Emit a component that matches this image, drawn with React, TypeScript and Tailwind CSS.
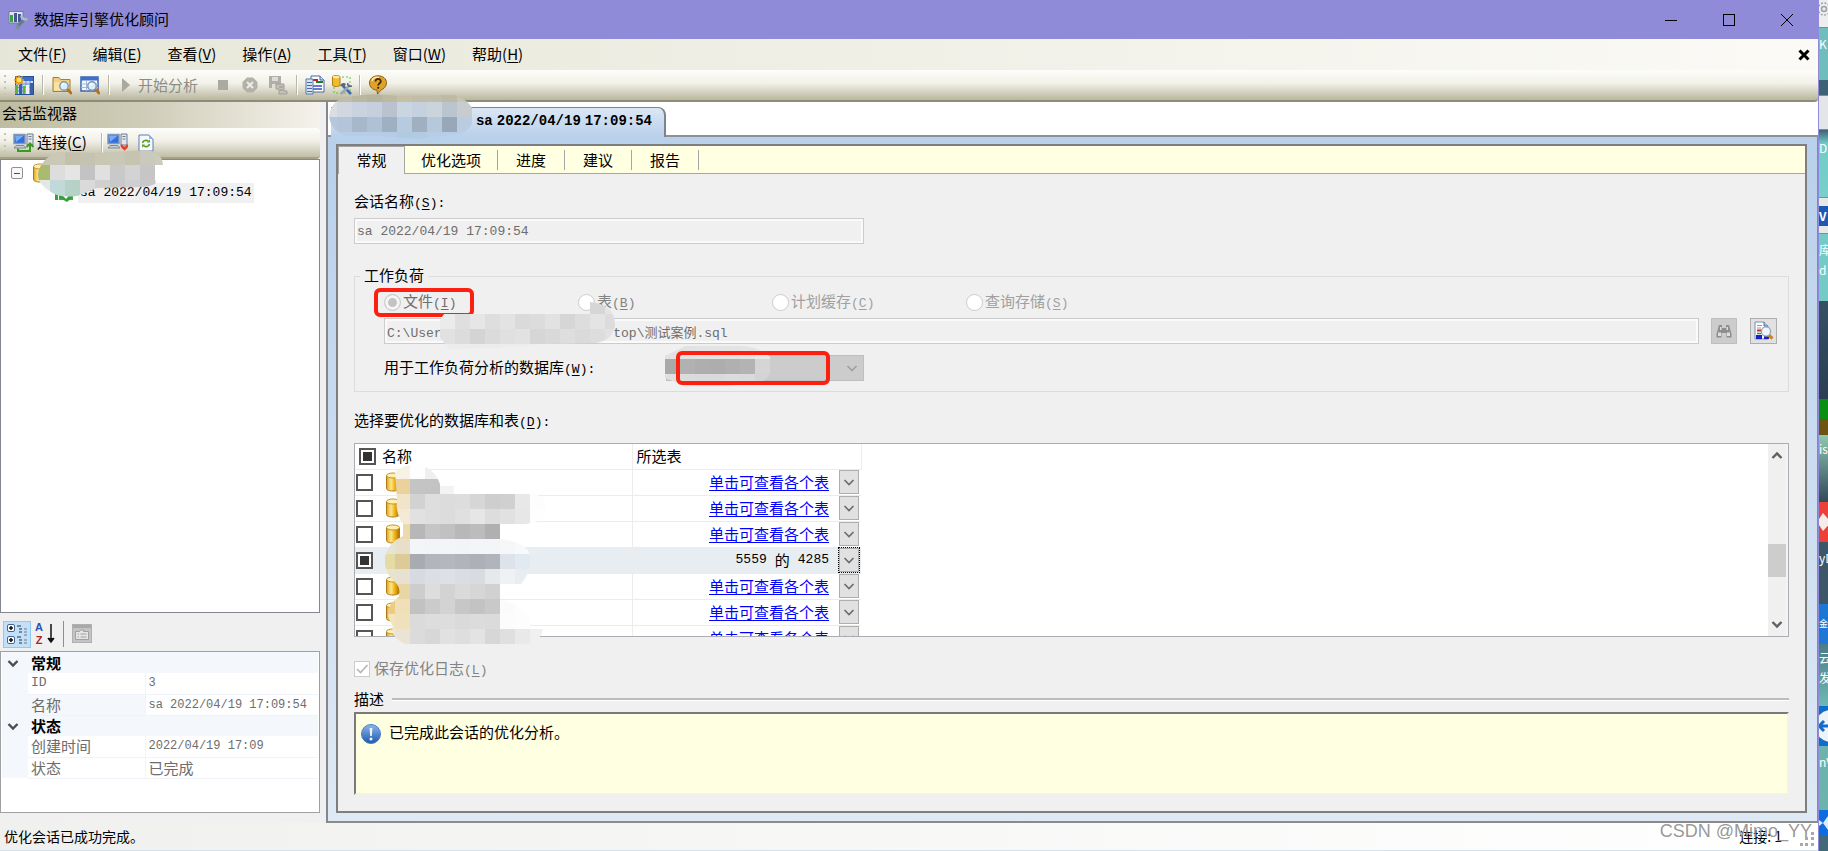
import React from 'react';
import clsx from 'clsx';

const MONO = "font-['Liberation_Mono','Noto_Sans_CJK_SC',monospace]";

/* ---------- data ---------- */

const MENUS = [
  { label: '文件', hotkey: 'F' },
  { label: '编辑', hotkey: 'E' },
  { label: '查看', hotkey: 'V' },
  { label: '操作', hotkey: 'A' },
  { label: '工具', hotkey: 'T' },
  { label: '窗口', hotkey: 'W' },
  { label: '帮助', hotkey: 'H' },
];

const TABS = ['优化选项', '进度', '建议', '报告'];

const SOURCES = [
  { label: '文件', hotkey: 'I', checked: true, tone: 'text-[#6d6d6d]' },
  { label: '表', hotkey: 'B', checked: false, tone: 'text-[#838383]' },
  { label: '计划缓存', hotkey: 'C', checked: false, tone: 'text-[#a0a0a0]' },
  { label: '查询存储', hotkey: 'S', checked: false, tone: 'text-[#a0a0a0]' },
];

const DATABASES = [
  { id: 1, selected: false },
  { id: 2, selected: false },
  { id: 3, selected: false },
  { id: 4, selected: true },
  { id: 5, selected: false },
  { id: 6, selected: false },
  { id: 7, selected: false },
];

const PROPERTIES = [
  {
    category: '常规',
    rows: [
      { name: 'ID', value: '3', active: false },
      { name: '名称', value: 'sa 2022/04/19 17:09:54', active: true },
    ],
  },
  {
    category: '状态',
    rows: [
      { name: '创建时间', value: '2022/04/19 17:09', active: false },
      { name: '状态', value: '已完成', active: false },
    ],
  },
];

// The middle of the path is censored
const WORKLOAD_FILE = 'C:\\User' + ' '.repeat(22) + 'top\\测试案例.sql';

/* ---------- small pieces ---------- */

const Hotkey: React.FC<{ k: string; colon?: boolean }> = ({ k, colon }) => (
  <span className={clsx('text-[13px]', MONO)}>
    (<u className="underline-offset-2">{k}</u>){colon && ':'}
  </span>
);

const Separator = () => (
  <span className="h-5 w-0.5 border-l border-[#b9b8a6] bg-white" />
);

const Grip = () => (
  <span className="flex flex-col gap-1">
    {[0, 1, 2, 3].map((i) => (
      <span key={i} className="h-0.5 w-0.5 bg-[#c5c3b4]" />
    ))}
  </span>
);

const Chevron: React.FC<{ className?: string; up?: boolean; bold?: boolean }> = ({ className, up, bold }) => (
  <svg viewBox="0 0 12 12" className={clsx('h-3 w-3', className)} fill="none" stroke="currentColor" strokeWidth={bold ? 2.4 : 1.6}>
    <path d={up ? 'M1.5 8 6 3.5 10.5 8' : 'M1.5 4 6 8.5 10.5 4'} />
  </svg>
);

const CylinderIcon: React.FC<{ className?: string }> = ({ className }) => (
  <svg viewBox="0 0 16 20" className={clsx('h-5 w-4', className)}>
    <defs>
      <linearGradient id="cyl" x1="0" x2="1">
        <stop offset="0" stopColor="#e0a41e" />
        <stop offset="0.35" stopColor="#fbe78e" />
        <stop offset="0.65" stopColor="#f0b010" />
        <stop offset="1" stopColor="#a86c04" />
      </linearGradient>
    </defs>
    <path d="M1.500 3.500v13c0 1.500 3 2.500 6.500 2.500s6.500-1 6.500-2.500v-13z" fill="url(#cyl)" stroke="#b07a10" strokeWidth="1" />
    <ellipse cx="8" cy="3.500" rx="6.500" ry="2.500" fill="#fdf0b0" stroke="#c79427" strokeWidth="1" />
  </svg>
);

/* ---------- toolbar icons ---------- */

const AppIcon = () => (
  <svg viewBox="0 0 20 20" className="h-5 w-5">
    <rect x="1" y="1.500" width="14" height="11.500" fill="#dfe6ee" stroke="#6d7f99" />
    <path d="M2 5h3v7H2z" fill="#3da03a" />
    <path d="M6 3h3v9H6z" fill="#43589c" />
    <path d="M10 4h3v8h-3z" fill="#43589c" />
    <path d="M17 7.500 9.500 17" stroke="#68798c" strokeWidth="3" />
    <path d="M13 5.500c1 3 3 4.500 6.500 3.500" stroke="#a9bccb" strokeWidth="2.500" fill="none" />
    <circle cx="9.500" cy="17" r="2.200" fill="#7d8ea0" />
  </svg>
);

const NewSessionIcon = () => (
  <svg viewBox="0 0 20 20" className="h-5 w-5">
    <rect x="1.500" y="1.500" width="18" height="18" fill="#c9dcf6" stroke="#2b4f95" />
    <path d="M2 2h17v4H2z" fill="#3f6fc4" />
    <path d="M2 9h17M2 12.500h17M2 16h17M8 6v13M12 6v13M16 6v13" stroke="#6f8fc9" strokeWidth="1" />
    <path d="M1 10h3v9H1zM9 11h2v8H9z" fill="#5fb13b" />
    <path d="M5 9h3v10H5zM16 8h3v11h-3z" fill="#3a5ea8" />
    <path d="M12 10h3v9h-3z" fill="#eef3fb" />
    <path d="M5 0v10M0 5h10M1.500 1.500l7 7M8.500 1.500l-7 7" stroke="#f59a14" strokeWidth="1.500" />
    <circle cx="5" cy="5" r="3" fill="#ffe34d" stroke="#f0900a" />
  </svg>
);

const Magnifier = () => (
  <>
    <path d="m15 14 4 4" stroke="#b8701c" strokeWidth="3" strokeLinecap="round" />
    <circle cx="12" cy="11" r="4.200" fill="#dbeeff" stroke="#8195ad" strokeWidth="1.400" />
    <path d="M9.800 10.500c.3-1.300 1.200-2 2.400-2" stroke="#fff" strokeWidth="1.300" fill="none" />
  </>
);

const FolderFindIcon = () => (
  <svg viewBox="0 0 20 20" className="h-5 w-5">
    <path d="M1 2.500h6l1.500 2H18v12H1z" fill="#f0d080" stroke="#a08038" />
    <path d="M2 7h15v8.500H2z" fill="#f9e3a2" />
    <Magnifier />
  </svg>
);

const TableFindIcon = () => (
  <svg viewBox="0 0 20 20" className="h-5 w-5">
    <rect x="1" y="2" width="17" height="14" fill="#f4f8fd" stroke="#3763b4" strokeWidth="1.500" />
    <path d="M1 2h17v3.500H1z" fill="#3f70c8" />
    <path d="M1 9h17M1 12.500h17M6.500 5v11M12 5v11" stroke="#9db6dc" />
    <Magnifier />
  </svg>
);

const CancelIcon = () => (
  <svg viewBox="0 0 16 16" className="h-4 w-4">
    <path d="M5 .5h6L15.500 5v6L11 15.500H5L.5 11V5z" fill="#b3b2aa" />
    <path d="m5 5 6 6M11 5l-6 6" stroke="#eeede6" strokeWidth="2" />
  </svg>
);

const SaveScriptIcon = () => (
  <svg viewBox="0 0 20 20" className="h-5 w-5">
    <path d="M1 1h12v12H1z" fill="#b0afa7" />
    <path d="M4 2h6v4H4zM4 9h6v4H4z" fill="#deddd5" />
    <path d="M8 9h8v7h3v3h-8v-5H8z" fill="#c2c1b8" stroke="#a09f97" />
    <path d="M11 12h4M12 15h3" stroke="#94938b" />
  </svg>
);

const ReportIcon = () => (
  <svg viewBox="0 0 20 20" className="h-5 w-5">
    <path d="M6 1h9l4 4v12H6z" fill="#fff" stroke="#4a69a5" />
    <path d="M15 1v4h4" fill="#c7d7ef" stroke="#4a69a5" />
    <path d="M8 5h5" stroke="#c42020" strokeWidth="2" />
    <path d="M11 7h7" stroke="#1d7a2a" strokeWidth="2" />
    <path d="M8 11h9M8 14h9" stroke="#3a4fc0" strokeWidth="1.500" />
    <path d="M1 4h7v15H1z" fill="#d6e2f2" stroke="#5d7ca8" />
    <path d="M2 7.500h5M2 10.500h5M2 13.500h5M2 16.500h5" stroke="#4b6ea2" />
  </svg>
);

const ToolsIcon = () => (
  <svg viewBox="0 0 20 20" className="h-5 w-5">
    <rect x="2" y="2" width="16" height="16" fill="none" stroke="#58c940" strokeDasharray="2 2" />
    <path d="M.5 2c0-2 7.500-2 7.500 0v8c0 2-7.500 2-7.500 0z" fill="#f0bc2c" stroke="#ad7d11" />
    <ellipse cx="4.200" cy="2" rx="3.400" ry="1.300" fill="#ffeaa0" />
    <path d="m11 11 8 8" stroke="#3c69ad" strokeWidth="2.500" />
    <path d="m18 10-9 9" stroke="#9aa5b3" strokeWidth="2.500" />
    <path d="M8 11c1-3 4-4 6-2l-2 3z" fill="#56677c" />
    <path d="M16 8c-1 2 1 4 4 3" stroke="#56677c" strokeWidth="1.500" fill="none" />
  </svg>
);

const HelpIcon = () => (
  <svg viewBox="0 0 20 20" className="h-5 w-5">
    <path d="M10 .8c5 0 8.500 3 8.500 7 0 4-3 6-5.500 7.200-1 .6-1.400 2-3.500 4.200l-.5-4C4.500 14.800 1.500 12 1.500 8c0-4.200 3.500-7.200 8.500-7.200z" fill="#dfa32c" stroke="#8c5e12" />
    <path d="M4 6c1-3 4-4 7-3.500" stroke="#ffe9a8" strokeWidth="1.500" fill="none" />
    <path d="M7.500 6.500c0-3.500 5.500-3.300 5.300 0-.1 1.800-2.600 1.900-2.600 4" stroke="#3c2a0a" strokeWidth="1.800" fill="none" />
    <circle cx="10.200" cy="12.800" r="1.100" fill="#3c2a0a" />
  </svg>
);

const ServerIcon: React.FC<{ disconnect?: boolean }> = ({ disconnect }) => (
  <svg viewBox="0 0 21 20" className="h-5 w-[21px]">
    <path d="M14 1h6v11h-6z" fill="#e2e7ee" stroke="#6e7b8f" />
    <path d="M15.500 3.500h3M15.500 6h3" stroke="#6e7b8f" />
    <rect x="1" y="1.500" width="11" height="9" fill="#2f6fe0" stroke="#8398bd" strokeWidth="1.500" />
    <path d="M2 2.500h9L3 9z" fill="#79aaf5" />
    <path d="M3 12.500h8l2 2.500H1z" fill="#c4cbd6" stroke="#7d889b" />
    {disconnect ? (
      <path d="m14 12 3.500 4L21 12M14.500 14.500h6" stroke="#ee3a1f" strokeWidth="2.200" fill="none" />
    ) : (
      <path d="M5 15.500V18h12v-6M13.500 14 17 10.500l3.500 3.500" stroke="#3c9a20" strokeWidth="2" fill="none" />
    )}
  </svg>
);

const RefreshIcon = () => (
  <svg viewBox="0 0 16 18" className="h-[18px] w-4">
    <path d="M1 1h10l4 4v12H1z" fill="#f5f9ff" stroke="#5b7db5" />
    <path d="M11 1v4h4z" fill="#9db8e0" />
    <path d="M4.500 9c.5-2.500 4-3.500 6-1.500M11.500 10c-.5 2.500-4 3.500-6 1.500" stroke="#5b9c22" strokeWidth="1.600" fill="none" />
    <path d="M9 8.500h3v-3zM7 10.500H4v3z" fill="#5b9c22" />
  </svg>
);

const SessionIcon = () => (
  <svg viewBox="0 0 20 20" className="h-5 w-5">
    <path d="M1 5h3v12H1zM5 8h3v9H5z" fill="#3f9b46" />
    <path d="M9 3h10v14H4l5-3z" fill="#49ad50" />
    <path d="M6 10h13v4l-6 5-7-4z" fill="#34a03c" />
    <path d="m9 11.500 3 3 5-6" stroke="#fff" strokeWidth="2" fill="none" />
  </svg>
);

const CategorizedIcon = () => (
  <svg viewBox="0 0 22 22" className="h-[22px] w-[22px]">
    <rect x="1.500" y="1.500" width="7" height="7" rx="1.500" fill="#fff" stroke="#47648f" />
    <rect x="1.500" y="13.500" width="7" height="7" rx="1.500" fill="#fff" stroke="#47648f" />
    <path d="M3 5h4M5 3v4M3 17h4M5 15v4" stroke="#111" strokeWidth="1.500" />
    <path d="M11 3h4M13 6h3M13 9h3M11 14h4M13 17h3M13 20h3" stroke="#5a6b80" strokeWidth="1.300" />
    <path d="M18 6h3M18 9h3M18 12h3M18 17h3M18 20h3" stroke="#8c99aa" strokeWidth="1.300" />
  </svg>
);

const PageIcon = () => (
  <svg viewBox="0 0 20 20" className="h-5 w-5">
    <rect x="0.500" y="0.500" width="19" height="18" fill="#c4c4c4" stroke="#b0b0b0" />
    <path d="M1 1h18v3H1z" fill="#a9a9a9" />
    <path d="M3.500 7.500h4l1-1.500h3v1.500h5v8h-13z" fill="#e6e6e6" stroke="#a0a0a0" />
    <path d="M5.500 10h1.500M8.500 10h6M5.500 13h1.500M8.500 13h6" stroke="#a0a0a0" />
  </svg>
);

const BinocularsIcon = () => (
  <svg viewBox="0 0 16 16" className="h-4 w-4">
    <path d="M3 2h3v3h4V2h3l2.500 9v3.500h-5V10h-5v4.500h-5V11z" fill="#8e8e8e" />
    <path d="M2 9.500h3v3.500H2zM11 9.500h3v3.500h-3zM4 4h1.500v3H4zM10.500 4H12v3h-1.500z" fill="#dedede" />
  </svg>
);

const PreviewIcon = () => (
  <svg viewBox="0 0 20 20" className="h-5 w-5">
    <path d="M1 1h9l4 4v13H1z" fill="#fff" stroke="#7a8db5" />
    <path d="M10 1v4h4" fill="#b9c8e4" stroke="#4a69a5" />
    <path d="M3 4.500h5M3 7h4" stroke="#9a9a9a" />
    <path d="M3 9.500h4" stroke="#d02828" strokeWidth="2" />
    <path d="M3 12.500h4" stroke="#279a3a" strokeWidth="1.500" />
    <path d="M2 14h6v4H2zM10 15h5v3h-5z" fill="#1522c8" />
    <path d="m14.500 14 4 3.500" stroke="#c98516" strokeWidth="3" />
    <circle cx="12" cy="10.500" r="4.600" fill="#eef5fc" stroke="#98a3b0" strokeWidth="1.300" />
  </svg>
);

const InfoIcon = () => (
  <svg viewBox="0 0 20 20" className="h-5 w-5 shrink-0">
    <defs>
      <linearGradient id="info" x1="0" y1="0" x2="0" y2="1">
        <stop offset="0" stopColor="#8bb8ee" />
        <stop offset="1" stopColor="#1d57ac" />
      </linearGradient>
    </defs>
    <circle cx="10" cy="10" r="9.500" fill="url(#info)" stroke="#4a7cc4" />
    <path d="M8.600 4h2.800l-.6 8H9.200z" fill="#f2f4fa" />
    <circle cx="10" cy="15" r="1.500" fill="#f2f4fa" />
  </svg>
);

/* ---------- censored areas ---------- */

interface MosaicRow {
  x: number;
  h: number;
  cells: string[];
}

// Blocks are 15 px wide; a row may start anywhere on that grid.
const Mosaic: React.FC<{ id: string; w: number; h: number; outline: string; rows: MosaicRow[]; className?: string }> = ({
  id,
  w,
  h,
  outline,
  rows,
  className,
}) => {
  let y = 0;
  return (
    <svg width={w} height={h} viewBox={`0 0 ${w} ${h}`} className={clsx('pointer-events-none absolute', className)} shapeRendering="crispEdges" aria-hidden="true">
      <clipPath id={id}>
        <path d={outline} />
      </clipPath>
      <g clipPath={`url(#${id})`}>
        {rows.map((row, r) => {
          const top = y;
          y += row.h;
          return row.cells.map((fill, c) => (
            <rect key={`${r}-${c}`} x={row.x + c * 15} y={top} width={15} height={row.h} fill={fill} />
          ));
        })}
      </g>
    </svg>
  );
};

const TREE_ROWS: MosaicRow[] = [
  { x: -2, h: 15, cells: ['#c9c7b4', '#cac8b6', '#c3c1ac', '#c5c3b0', '#c9c6b1', '#c9c7b6', '#c6c3ae', '#c9c9bd', '#cdcbbc'] },
  { x: -2, h: 15, cells: ['#a9bb70', '#dddddd', '#e5e5e5', '#c3c3c3', '#e0e0e0', '#c9c9c9', '#d3d3d3', '#c6c6c6'] },
  { x: -2, h: 17, cells: ['#e3e8e4', '#c1d9d9', '#b6d1c6', '#dadada', '#d0d0d0', '#c9c9c9', '#cfcfcf', '#c8c8c8', '#c8c8c8'] },
];

const TAB_ROWS: MosaicRow[] = [
  { x: -7, h: 8, cells: ['#c9c7bb', '#bfbda9', '#bab8a1', '#b6b49c', '#bbb9a2', '#c5c0a5', '#c0bea9', '#c0beaa', '#bdbba6', '#c7c5b4'] },
  { x: -7, h: 15, cells: ['#dcdde2', '#d0d7e0', '#c9d3df', '#c6cfdc', '#b9c2ce', '#cad5e2', '#c5d1df', '#cbd3dc', '#bac5cf', '#c7cccf'] },
  { x: -7, h: 15, cells: ['#b7c7db', '#b4c5d9', '#a7b8cb', '#afc1d5', '#9fb0c3', '#b7cbe0', '#a0b0c1', '#b5c8dc', '#98a8b8', '#b9cce0'] },
  { x: -7, h: 8, cells: ['#b7cde6', '#b7cde6', '#b7cde6', '#b7cde6', '#b5cce4', '#b0cbe0', '#b3cbe2', '#b7cde6', '#b7cde6', '#b7cde6'] },
];

const PATH_ROWS: MosaicRow[] = [
  { x: 152, h: 12, cells: ['#d6d6d6', '#e4e4e4'] },
  { x: 2, h: 15, cells: ['#ebebeb', '#dfdfdf', '#e6e6e6', '#dedede', '#e3e3e3', '#dadada', '#dcdcdc', '#e2e2e2', '#d6d6d6', '#dddddd', '#e4e4e4', '#dcdcdc'] },
  { x: 2, h: 15, cells: ['#e1e1e1', '#dcdcdc', '#d4d4d4', '#dbdbdb', '#e0e0e0', '#e2e2e2', '#d6d6d6', '#d9d9d9', '#dedede', '#dadada', '#dddddd', '#e2e2e2'] },
  { x: 2, h: 5, cells: ['#ececec', '#ececec', '#ececec', '#ececec', '#ededed', '#ededed', '#eeeeee'] },
];

const COMBO_ROWS: MosaicRow[] = [
  { x: 0, h: 13, cells: ['#e2e2e2', '#e2e2e2', '#e4e4e4', '#e3e3e3', '#e3e3e3', '#e4e4e4', '#e8e8e8'] },
  { x: 0, h: 15, cells: ['#a9a9a9', '#b1b1b1', '#aeaeae', '#adadad', '#b0b0b0', '#b3b3b3', '#d5d5d5'] },
  { x: 0, h: 12, cells: ['#e0e0e0', '#dcdcdc', '#dadada', '#dadada', '#dcdcdc', '#dadada', '#d4d4d4'] },
];

const TABLE_ROWS: MosaicRow[] = [
  { x: 10, h: 15, cells: ['#f7f1e6', '#fefefe', '#efefef'] },
  { x: 10, h: 15, cells: ['#ebd19b', '#c4c4c4', '#c3c3c3', '#f3f3f3', '#fcfcfc'] },
  { x: 10, h: 15, cells: ['#f1e4c8', '#d2d2d2', '#dedede', '#dcdcdc', '#dddddd', '#d6d6d6', '#cecece', '#d0d0d0', '#e8e8e8', '#fdfdfd'] },
  { x: 10, h: 15, cells: ['#f3ead6', '#e1e1e1', '#dedede', '#dcdcdc', '#e0e0e0', '#e6e6e6', '#dddddd', '#e1e1e1', '#e7e7e7', '#fefefe'] },
  { x: -5, h: 15, cells: ['#f0d79c', '#eed9ac', '#b7b7b7', '#c5c5c5', '#c1c1c1', '#b8b8b8', '#bcbcbc', '#b0b0b0', '#f5f5f5'] },
  { x: -5, h: 15, cells: ['#e8e4d5', '#e7dfc9', '#f3f5f8', '#f2f4f7', '#f3f5f8', '#f2f4f7', '#f3f5f8', '#f3f5f8', '#f6f7f9', '#f8f9fa'] },
  { x: -5, h: 15, cells: ['#e5dca5', '#dccb96', '#a8acb0', '#b2b6bc', '#b4b8be', '#b1b5ba', '#adb1b7', '#b1b5bb', '#dce3ea', '#e2eaf1'] },
  { x: -5, h: 15, cells: ['#e8e3cf', '#e6e1d0', '#d7dbe1', '#dbdee3', '#dde0e5', '#dadde2', '#d8dbe0', '#e6e8eb', '#eff1f4', '#e8edf1'] },
  { x: -5, h: 15, cells: ['#e9cf96', '#e9d6a5', '#cdcdcd', '#dddddd', '#d3d3d3', '#dadada', '#d6d6d6', '#d1d1d1', '#fafafa'] },
  { x: -5, h: 15, cells: ['#eccb84', '#f1dfb7', '#c2c2c2', '#cbcbcb', '#d3d3d3', '#c7c7c7', '#c3c3c3', '#c9c9c9', '#fbfbfb', '#fdfdfd'] },
  { x: -5, h: 15, cells: ['#f3e6bd', '#f0e0bb', '#dbdbdb', '#dddddd', '#dddddd', '#dadada', '#dcdcdc', '#dbdbdb', '#fcfcfc', '#fdfdfd'] },
  { x: -5, h: 15, cells: ['#ece7da', '#ebe4d5', '#dbdbdb', '#d7d7d7', '#e1e1e1', '#dedede', '#e3e3e3', '#d7d7d7', '#dfdfdf', '#e9e9e9', '#f0f0f0'] },
];

/* ---------- chrome ---------- */

const TitleBar = () => (
  <header className="flex h-[39px] items-center bg-[#8f8bd8] pr-0.5 pl-2 text-black">
    <AppIcon />
    <h1 className="ml-1.5 flex-1 text-[15px]">数据库引擎优化顾问</h1>
    <button aria-label="最小化" className="flex h-full w-[58px] items-center justify-center">
      <svg viewBox="0 0 12 12" className="h-3 w-3" stroke="currentColor"><path d="M0 6.500h12" /></svg>
    </button>
    <button aria-label="最大化" className="flex h-full w-[58px] items-center justify-center">
      <span className="h-3 w-3 border border-black" />
    </button>
    <button aria-label="关闭" className="flex h-full w-[58px] items-center justify-center">
      <svg viewBox="0 0 12 12" className="h-3 w-3" stroke="currentColor"><path d="m0 0 12 12M12 0 0 12" /></svg>
    </button>
  </header>
);

const MenuBar = () => (
  <nav className="flex h-[31px] items-center bg-linear-to-r from-[#e6e6d8] to-[#fbfaf6] pr-1 pl-[5px]">
    {MENUS.map((menu) => (
      <button key={menu.hotkey} className="px-[13px] text-[15px]">
        {menu.label}(<u className="underline-offset-2">{menu.hotkey}</u>)
      </button>
    ))}
    <button aria-label="关闭会话" className="ml-auto p-1">
      <svg viewBox="0 0 12 12" className="h-3 w-3" stroke="black" strokeWidth="3"><path d="m1.500 1.500 9 9M10.500 1.500l-9 9" /></svg>
    </button>
  </nav>
);

const ToolBar = () => (
  <div className="bg-[#efeee8]">
    <div className="flex h-8 items-center rounded-br border-b-2 border-[#8e8c78] bg-linear-to-b from-[#fdfefa] via-[#f1f0e8] via-45% to-[#b9b79c] pl-1">
      <Grip />
      <div className="ml-2 flex items-center gap-2">
        <button aria-label="新建会话"><NewSessionIcon /></button>
        <Separator />
        <button aria-label="打开会话"><FolderFindIcon /></button>
        <button aria-label="打开跟踪表"><TableFindIcon /></button>
        <Separator />
        <button disabled className="flex items-center gap-2 pl-1 text-[15px] text-[#8d8c84]">
          <svg viewBox="0 0 8 14" className="h-3.5 w-2"><path d="M0 0l8 7-8 7z" fill="#aaa9a1" /></svg>
          开始分析
        </button>
      </div>
      <div className="ml-5 flex items-center gap-3.5">
        <button disabled aria-label="停止分析" className="h-2.5 w-2.5 bg-[#abaaa2]" />
        <button disabled aria-label="取消分析"><CancelIcon /></button>
        <button disabled aria-label="保存脚本" className="-ml-1"><SaveScriptIcon /></button>
      </div>
      <div className="ml-2 flex items-center gap-[7px]">
        <Separator />
        <button aria-label="查看报告"><ReportIcon /></button>
        <button aria-label="选项"><ToolsIcon /></button>
        <Separator />
        <button aria-label="帮助"><HelpIcon /></button>
      </div>
    </div>
  </div>
);

/* ---------- left side ---------- */

const SessionTree = () => (
  <div className="relative flex-1 border border-[#828790] bg-white pt-[3px]">
    <div className="flex h-5 items-center pl-2.5">
      <button aria-label="折叠" className="flex h-3 w-3 items-center justify-center rounded-xs border border-[#919191] bg-[#f8f8f8]">
        <span className="h-px w-1.5 bg-[#3b4f9c]" />
      </button>
      <CylinderIcon className="ml-[9px]" />
    </div>
    <div className="flex h-5 items-center pl-[53px]">
      <SessionIcon />
      <span className={clsx('ml-1 bg-[#f0f0f0] px-0.5 text-[13px]', MONO)}>sa 2022/04/19 17:09:54</span>
    </div>
    <Mosaic
      id="mosaic-tree"
      w={126}
      h={47}
      className="-top-2.5 left-[36px]"
      outline="M20 2 60 3 110 0Q125 2 126 15L118 15V30Q122 36 105 37L60 38 40 46Q22 48 14 42 0 34 1 24 3 10 20 2z"
      rows={TREE_ROWS}
    />
  </div>
);

const PropertyGrid = () => (
  <div className="h-[162px] border border-[#a0a0a0] bg-white px-px">
    <table className="w-full table-fixed border-collapse text-left text-[15px] text-[#6d6d6d]">
      <colgroup>
        <col className="w-[26px]" />
        <col className="w-[117px]" />
        <col />
      </colgroup>
      {PROPERTIES.map((group) => (
        <tbody key={group.category}>
          <tr className="h-[21px] bg-[#f4f7fc] text-black">
            <td className="p-0">
              <button aria-label="折叠" className="flex pl-[5px] text-[#4d4d4d]">
                <Chevron bold />
              </button>
            </td>
            <th colSpan={2} className="p-0 pl-[3px] font-bold leading-[18px]">{group.category}</th>
          </tr>
          {group.rows.map((row) => (
            <tr key={row.name} className="h-[21px]">
              <td className="bg-[#f4f7fc] p-0" />
              <td
                className={clsx(
                  'border-r border-b border-[#f0f3f9] p-0 pl-[3px] leading-[18px]',
                  row.active && 'bg-[#f4f7fc]',
                  row.name === 'ID' && MONO
                )}
              >
                {row.name === 'ID' ? <span className="text-[13px]">ID</span> : row.name}
              </td>
              <td className="border-b border-[#f0f3f9] p-0 pl-[3px] leading-[18px] whitespace-nowrap">
                {row.value === '已完成' ? row.value : <span className={clsx('block text-[12px] leading-[18px]', MONO)}>{row.value}</span>}
              </td>
            </tr>
          ))}
        </tbody>
      ))}
    </table>
  </div>
);

const SessionMonitor = () => (
  <aside className="flex w-[320px] shrink-0 flex-col bg-[#f0f0f0] pb-2.5">
    <h2 className="h-[26px] bg-linear-to-r from-[#bebca0] via-[#cfcdb8] via-45% to-[#f5f2ec] pl-0.5 text-[15px] leading-[22px]">会话监视器</h2>
    <div className="flex h-[31px] items-center rounded-r border-b-2 border-[#a3a188] bg-linear-to-b from-[#fdfefa] via-[#f1f0e8] via-45% to-[#c0bea5] pl-1">
      <Grip />
      <button className="ml-[7px] flex items-center gap-[3px] text-[15px]">
        <ServerIcon />
        <span>连接(<u className="underline-offset-2">C</u>)</span>
      </button>
      <div className="ml-3.5 flex items-center">
        <Separator />
        <button aria-label="断开连接" className="ml-1"><ServerIcon disconnect /></button>
        <button aria-label="刷新" className="ml-2.5"><RefreshIcon /></button>
      </div>
    </div>
    <SessionTree />
    <div className="flex h-[38px] items-center pt-1 pl-[3px]">
      <button aria-label="按分类顺序" className="flex h-[27px] w-7 items-center justify-center border border-[#90c8f6] bg-[#c2e0f7]">
        <CategorizedIcon />
      </button>
      <button aria-label="字母顺序" className="flex w-7 items-center justify-center">
        <span className="flex flex-col font-['Liberation_Sans',sans-serif] text-[11px] leading-[13px] font-bold">
          <span className="text-[#2c4fb0]">A</span>
          <span className="text-[#a8272b]">Z</span>
        </span>
        <svg viewBox="0 0 8 20" className="ml-1 h-5 w-2"><path d="M4 0v18M1 14l3 4 3-4" stroke="#111" strokeWidth="1.500" fill="#111" /></svg>
      </button>
      <span className="ml-1 h-[26px] w-px bg-[#8f8f8f]" />
      <button disabled aria-label="属性页" className="ml-2"><PageIcon /></button>
    </div>
    <PropertyGrid />
  </aside>
);

/* ---------- right side ---------- */

const Workload = () => (
  <fieldset className="mt-[22px] border border-[#dcdcdc] pr-[11px] pb-2.5 pl-[29px]">
    <legend className="-ml-6 h-5 px-1 text-[15px] leading-[18px]">工作负荷</legend>
    <div className="relative mt-1.5 flex h-5 items-center">
      {SOURCES.map((source) => (
        <label key={source.hotkey} className={clsx('flex w-[194px] items-center gap-0.5 text-[15px]', source.tone)}>
          <input
            type="radio"
            name="source"
            defaultChecked={source.checked}
            disabled
            className="h-[17px] w-[17px] appearance-none rounded-full border border-[#cccccc] bg-white checked:bg-[#c3c3c3] checked:shadow-[inset_0_0_0_3px_#f6f6f6]"
          />
          <span>{source.label}<Hotkey k={source.hotkey} /></span>
        </label>
      ))}
      <span className="absolute -top-1 -left-2.5 h-[29px] w-[100px] rounded-md border-4 border-[#fb2010]" />
    </div>
    <div className="relative mt-1.5 flex items-center">
      <input
        aria-label="工作负荷文件"
        disabled
        defaultValue={WORKLOAD_FILE}
        className={clsx('h-[26px] min-w-0 flex-1 border border-[#cccccc] bg-[#f0f0f0] px-0.5 text-[13px] text-[#6d6d6d] shadow-[inset_0_0_0_2px_#fafafa]', MONO)}
      />
      <button disabled aria-label="查找" className="ml-3 flex h-[26px] w-[26px] items-center justify-center border border-[#bfbfbf] bg-[#cccccc]">
        <BinocularsIcon />
      </button>
      <button aria-label="预览" className="ml-[13px] flex h-[26px] w-[27px] items-center justify-center border border-[#adadad] bg-[#e1e1e1]">
        <PreviewIcon />
      </button>
      <Mosaic
        id="mosaic-path"
        w={178}
        h={47}
        className="-top-4 left-[54px]"
        outline="M152 0Q176 2 177 22 176 38 158 41L110 42 60 46 12 47 2 36Q-2 22 6 12L152 12z"
        rows={PATH_ROWS}
      />
    </div>
    <div className="relative mt-[11px] flex h-[26px] items-center">
      <label htmlFor="workload-db" className="w-[282px] text-[15px] leading-6">
        用于工作负荷分析的数据库<Hotkey k="W" colon />
      </label>
      <div className="relative w-[198px]">
        <select id="workload-db" disabled className="block h-[26px] w-full appearance-none border border-[#bfbfbf] bg-[#cccccc]" />
        <Chevron className="absolute top-[7px] right-1.5 text-[#a0a0a0]" />
        <Mosaic
          id="mosaic-combo"
          w={105}
          h={40}
          className="-top-[9px] -left-px"
          outline="M20 0H80Q96 2 105 11V26Q102 36 90 38L60 40H20L0 32V10z"
          rows={COMBO_ROWS}
        />
        <span className="absolute -top-1 left-2.5 h-[34px] w-[154px] rounded-md border-4 border-[#fb2010]" />
      </div>
    </div>
  </fieldset>
);

const BOX = 'block h-[17px] w-[17px] appearance-none border-2 border-[#555555] bg-white checked:bg-[#333333] checked:shadow-[inset_0_0_0_2px_white]';

const DatabaseTable = () => (
  <div className="relative mt-[13px]">
    <div className="flex h-[194px] overflow-hidden border border-[#abadb3] bg-white">
      <div className="flex-1 overflow-hidden">
        <table className="table-fixed border-collapse text-left text-[15px]">
          <colgroup>
            <col className="w-[277px]" />
            <col className="w-[229px]" />
          </colgroup>
          <thead>
            <tr className="h-[25px]">
              <th className="border-r border-b border-[#ececec] p-0 font-normal">
                <label className="flex items-center gap-1.5 pl-1 leading-5">
                  <input type="checkbox" defaultChecked className={BOX} />
                  名称
                </label>
              </th>
              <th className="border-r border-b border-[#ececec] p-0 pl-1 leading-5 font-normal">所选表</th>
            </tr>
          </thead>
          <tbody>
            {DATABASES.map((db) => (
              <tr key={db.id} className={clsx('h-[26px] border-b border-[#ececec]', db.selected && 'bg-[#e8edf1]')}>
                <td className="border-r border-[#ececec] p-0">
                  <div className="flex items-center gap-3 pl-px">
                    <input type="checkbox" aria-label={`数据库 ${db.id}`} defaultChecked={db.selected} className={BOX} />
                    <CylinderIcon />
                  </div>
                </td>
                <td className="p-0">
                  <div className="flex items-center justify-end pr-0.5">
                    {db.selected ? (
                      <span className="flex gap-2 leading-5">
                        <span className={clsx('text-[13px]', MONO)}>5559</span>的
                        <span className={clsx('text-[13px]', MONO)}>4285</span>
                      </span>
                    ) : (
                      <a href="#" className="leading-5 text-[#0000ff] underline underline-offset-2">单击可查看各个表</a>
                    )}
                    <button
                      aria-label="选择表"
                      className={clsx(
                        'ml-2.5 flex h-6 w-5 items-center justify-center border border-[#adadad] bg-[#e1e1e1] text-[#6b6b6b]',
                        db.selected && 'outline outline-dotted outline-black'
                      )}
                    >
                      <Chevron />
                    </button>
                  </div>
                </td>
              </tr>
            ))}
          </tbody>
        </table>
      </div>
      <div className="flex w-5 flex-col items-center border-r-2 border-[#f4f4f4] bg-[#f0f0f0] py-1 text-[#606060]">
        <Chevron up bold className="mt-0.5" />
        <span className="mt-[82px] h-[33px] w-full bg-[#cdcdcd]" />
        <Chevron bold className="mt-auto mb-0.5" />
      </div>
    </div>
    <Mosaic
      id="mosaic-table"
      w={165}
      h={180}
      className="top-[21px] left-[31px]"
      outline="M10 8Q22 -2 38 2 50 6 55 20V22H69V30H150Q165 36 163 45 160 58 140 60H115V75Q145 78 146 95 146 108 136 120H115V136Q140 140 148 160L158 165Q156 178 140 180H20Q4 172 8 162 -2 148 8 138L14 132Q16 124 10 118 -2 108 0 92 4 78 18 72L18 60Q10 48 12 36z"
      rows={TABLE_ROWS}
    />
  </div>
);

const GeneralTab = () => (
  <div className="flex flex-1 flex-col px-4 pt-[18px] pb-4">
    <label htmlFor="session-name" className="h-5 text-[15px] leading-[18px]">
      会话名称<Hotkey k="S" colon />
    </label>
    <input
      id="session-name"
      disabled
      defaultValue="sa 2022/04/19 17:09:54"
      className={clsx('mt-1.5 h-[26px] w-[510px] border border-[#cccccc] bg-[#f0f0f0] px-0.5 text-[13px] text-[#6d6d6d] shadow-[inset_0_0_0_2px_#fafafa]', MONO)}
    />
    <Workload />
    <p className="mt-[18px] h-5 text-[15px] leading-5">
      选择要优化的数据库和表<Hotkey k="D" colon />
    </p>
    <DatabaseTable />
    <label className="mt-[22px] flex h-5 items-center gap-1 text-[15px] text-[#838383]">
      <span className="relative">
        <input type="checkbox" defaultChecked disabled className="block h-4 w-4 appearance-none border border-[#cccccc] bg-white" />
        <svg viewBox="0 0 16 16" className="absolute inset-0 h-4 w-4" fill="none" stroke="#b5b5b5" strokeWidth="1.600"><path d="m3 8 3.500 3.500L13.500 4" /></svg>
      </span>
      <span>保存优化日志<Hotkey k="L" /></span>
    </label>
    <div className="mt-2.5 flex h-5 items-center gap-2 text-[15px]">
      <h3>描述</h3>
      <span className="h-[3px] flex-1 border-b border-white bg-[#bcbcbc]" />
    </div>
    <div className="mt-[3px] flex flex-1 items-start gap-2 border-2 border-t-[#7a7a7a] border-r-[#f2f2e8] border-b-[#f2f2e8] border-l-[#7a7a7a] bg-[#ffffe1] px-[5px] py-2.5 text-[15px] leading-5">
      <InfoIcon />
      <p className="-mt-0.5">已完成此会话的优化分析。</p>
    </div>
  </div>
);

const Workspace = () => (
  <main className="relative flex min-w-0 flex-1 flex-col border-l-2 border-[#85878c]">
    <div className="flex h-[35px] items-end border-b-2 border-[#8d9299] bg-white pl-[3px]">
      <div className={clsx('-mb-0.5 flex h-[30px] w-[335px] items-center justify-end gap-1 rounded-tr-lg border-t border-r-2 border-[#7c8490] bg-linear-to-b from-[#dbe7f5] to-[#b9d0ea] pr-3 pb-0.5 text-[14px] font-bold', MONO)}>
        <span>sa</span>
        <span>2022/04/19</span>
        <span>17:09:54</span>
      </div>
    </div>
    <div className="flex flex-1 flex-col border-r border-b-2 border-[#8b8b8b] bg-linear-to-b from-[#b9d0ea] to-[#dfe9f4] pt-[7px] pr-2.5 pb-2 pl-2">
      <section className="flex flex-1 flex-col border-2 border-[#7e7e7e] bg-[#f0f0f0]">
        <div className="flex h-7 items-end bg-[#ffffe1]">
          <button className="h-7 w-[67px] border-x border-t border-[#a5a5a5] border-b-transparent bg-[#f0f0f0] text-[15px]">常规</button>
          <div className="flex h-7 flex-1 items-center border-b border-[#a5a5a5]">
            {TABS.map((tab) => (
              <button key={tab} className="h-5 min-w-[67px] border-r border-[#a5a5a5] px-4 text-[15px] leading-5">
                {tab}
              </button>
            ))}
          </div>
        </div>
        <GeneralTab />
      </section>
    </div>
    <Mosaic
      id="mosaic-tab"
      w={145}
      h={46}
      className="-top-2 left-px"
      outline="M14 4Q40 -2 70 2L125 1Q142 6 145 20 144 38 128 40L90 45 50 42H18Q2 38 0 22 2 8 14 4z"
      rows={TAB_ROWS}
    />
  </main>
);

const StatusBar = () => (
  <footer className="relative flex h-7 items-center border-b border-[#d4e2ea] bg-linear-to-r from-[#f0f0ee] to-white pr-3 pl-1 text-[14px]">
    <span>优化会话已成功完成。</span>
    <span className="mr-6 ml-auto">连接: 1</span>
    <svg viewBox="0 0 14 14" className="absolute right-1 bottom-1 h-3.5 w-3.5" fill="#a9a9a9">
      <path d="M11 0h3v3h-3zM11 5h3v3h-3zM11 11h3v3h-3zM5 5h3v3H5zM5 11h3v3H5zM0 11h3v3H0z" />
    </svg>
    <span className="absolute -top-1 right-1.5 font-['Liberation_Sans',sans-serif] text-[18px] leading-6 text-[#8c8c8c]/90">CSDN @Mimo_YY</span>
  </footer>
);

/* Slice of the desktop that shows beside the window */
const DesktopEdge = () => (
  <div className="flex w-[9px] shrink-0 flex-col overflow-hidden bg-[#6fb3b0] text-[12px] leading-5 text-white" aria-hidden="true">
    <span className="h-7 border-b border-[#8a8a8a] bg-[#eeeeee]">
      <svg viewBox="0 0 9 18" className="h-[18px] w-[9px]" fill="none" stroke="#9aa2a8" strokeWidth="1.500"><circle cx="5" cy="9" r="6" strokeDasharray="2 1.500" /><circle cx="5" cy="9" r="2.500" /></svg>
    </span>
    <span className="h-[52px] bg-[#70bdbd] pt-1.5">K</span>
    <span className="h-[15px] bg-[#3f6176]" />
    <span className="h-[35px] border-y border-[#8a8a8a] bg-[#e4e5e8]" />
    <span className="h-[67px] bg-linear-to-b from-[#3f6176] via-[#70cbc8] via-20% to-[#78cfcb] pt-2">D</span>
    <span className="flex h-[37px] items-center border-y border-[#8a8a8a] bg-[#e8e8e8]">
      <span className="w-full bg-[#1c58b4] font-bold">V</span>
    </span>
    <span className="h-[67px] bg-[#74cac7] pt-1.5">库<br />d</span>
    <span className="h-[98px] bg-linear-to-b from-[#355064] to-[#2c3f52]" />
    <span className="h-5 bg-[#0b8f12]" />
    <span className="h-4 bg-[#6d5410]" />
    <span className="h-[67px] bg-linear-to-b from-[#8fc9b0] to-[#33495a] pt-1">is</span>
    <span className="flex h-10 items-center bg-[#ec4038]">
      <svg viewBox="0 0 9 18" className="h-[18px] w-[9px]"><path d="M4 0l8 9-8 9-6-9z" fill="#f3ece9" /></svg>
    </span>
    <span className="h-[62px] bg-[#3d5668] pt-1.5">yD</span>
    <span className="h-10 bg-[#1f77d4] pt-2.5 text-[9px]">金</span>
    <span className="h-[62px] bg-linear-to-b from-[#4b7c86] to-[#6fb9b3] pt-1">云<br />发</span>
    <span className="flex h-10 items-center bg-[#0f6ecb]">
      <svg viewBox="0 0 9 34" className="h-[34px] w-[9px]"><circle cx="12" cy="17" r="16" fill="#f0f3f6" /><path d="M9 17H1M5 12l-5 5 5 5" stroke="#0f6ecb" strokeWidth="3" fill="none" /></svg>
    </span>
    <span className="h-16 bg-[#6cb3ae] pt-1.5">nV</span>
    <span className="flex h-[26px] items-center bg-[#0f6be0]">
      <svg viewBox="0 0 9 14" className="h-3.5 w-[9px]"><path d="M0 4l4 3-4 3zM9 0 4 7l5 7z" fill="#dfeafc" /></svg>
    </span>
    <span className="flex-1 bg-[#41697a]" />
  </div>
);

export default function App() {
  return (
    <div className="flex min-h-screen bg-[#f0f0f0] font-['Noto_Sans_CJK_SC',sans-serif] text-black">
      <div className="flex min-w-0 flex-1 flex-col border-r border-[#8f8bd8]">
        <TitleBar />
        <MenuBar />
        <ToolBar />
        <div className="flex flex-1 gap-1.5">
          <SessionMonitor />
          <Workspace />
        </div>
        <StatusBar />
      </div>
      <DesktopEdge />
    </div>
  );
}
